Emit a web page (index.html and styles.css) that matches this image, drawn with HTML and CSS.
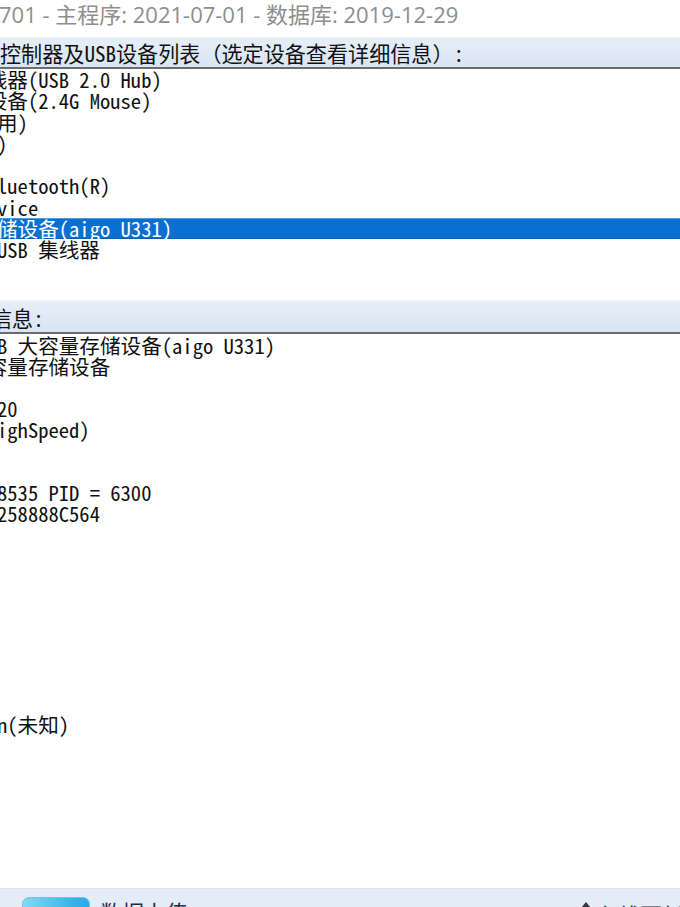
FILE: index.html
```html
<!DOCTYPE html>
<html lang="zh-CN">
<head>
<meta charset="utf-8">
<title>ChipGenius</title>
<link rel="stylesheet" href="styles.css">
</head>
<body>
<div class="window">
  <header class="title">
    <span class="title-text">701 - 主程序: 2021-07-01 - 数据库: 2019-12-29</span>
  </header>

  <div class="band band-top">
    <span class="band-text">控制器及USB设备列表（选定设备查看详细信息）:</span>
  </div>

  <div class="pane list">
    <div class="row cut">线器(USB 2.0 Hub)</div>
    <div class="row cut">设备(2.4G Mouse)</div>
    <div class="row">用)</div>
    <div class="row">)</div>
    <div class="row"> </div>
    <div class="row">luetooth(R)</div>
    <div class="row">vice</div>
    <div class="row selected">储设备(aigo U331)</div>
    <div class="row">USB 集线器</div>
  </div>

  <div class="band band-detail">
    <span class="band-text cut-text">信息:</span>
  </div>

  <div class="pane details">
    <div class="row">B 大容量存储设备(aigo U331)</div>
    <div class="row cut">容量存储设备</div>
    <div class="row"> </div>
    <div class="row">20</div>
    <div class="row">ighSpeed)</div>
    <div class="row"> </div>
    <div class="row"> </div>
    <div class="row">8535 PID = 6300</div>
    <div class="row">258888C564</div>
    <div class="row"> </div>
    <div class="row"> </div>
    <div class="row"> </div>
    <div class="row"> </div>
    <div class="row"> </div>
    <div class="row"> </div>
    <div class="row"> </div>
    <div class="row"> </div>
    <div class="row"> </div>
    <div class="row">n(未知)</div>
  </div>

  <footer class="footer">
    <div class="footer-left">
      <span class="btn"></span>
      <span class="footer-link">数据上传</span>
    </div>
    <div class="footer-right">
      <svg class="footer-icon" width="12" height="12" viewBox="0 0 12 12"><path d="M6 0 L11 6 L6 12 L1 6 Z" fill="#334"/></svg>
      <span class="footer-link">在线更新</span>
    </div>
  </footer>
</div>
</body>
</html>
```

FILE: styles.css
```css
html, body {
  margin: 0;
  padding: 0;
  background: #ffffff;
}

body {
  width: 680px;
  height: 907px;
  overflow: hidden;
}

.window {
  display: flex;
  flex-direction: column;
  width: 680px;
}

.title {
  height: 37px;
  display: flex;
  align-items: flex-start;
  padding-top: 0;
  box-sizing: border-box;
  overflow: hidden;
}

.title-text {
  font-family: "Open Sans", "Noto Sans CJK SC", sans-serif;
  font-size: 22px;
  line-height: 28px;
  color: #8e8e8e;
  white-space: pre;
  margin-left: -1px;
}

.band {
  background: linear-gradient(#e6eef8, #d9e5f3);
  border-top: 1px solid #eef3fa;
  border-bottom: 2px solid #6c6c6c;
  box-sizing: border-box;
  overflow: hidden;
  display: flex;
  align-items: center;
}

.band-top {
  height: 32px;
}

.band-detail {
  height: 34px;
  padding-top: 3px;
}

.band-text {
  font-family: "Noto Sans Mono CJK SC", "Noto Sans CJK SC", "Liberation Mono", monospace;
  font-size: 21.1px;
  line-height: 24px;
  color: #111;
  white-space: pre;
}

.cut-text {
  margin-left: -9px;
}

.pane {
  overflow: hidden;
  font-family: "Noto Sans Mono CJK SC", "Noto Sans CJK SC", "Liberation Mono", monospace;
  font-size: 20.6px;
  color: #111;
}

.list {
  height: 231px;
  line-height: 21.3px;
}

.list .row {
  height: 21.3px;
}

.details {
  height: 554px;
  padding-top: 1px;
  box-sizing: border-box;
  line-height: 21.05px;
}

.details .row {
  height: 21.05px;
}

.row {
  white-space: pre;
  margin-left: -3px;
}

.row.cut {
  margin-left: -13.3px;
}

.row.selected {
  margin-left: 0;
  text-indent: -3px;
  background: #0a70d0;
  box-shadow: inset 0 1px 0 #4c9be0, inset 0 -1px 0 #075fb3;
  color: #ffffff;
}

.footer {
  border-top: 1px solid #dfe4ea;
  background: #e4edf7;
  height: 40px;
  display: flex;
  justify-content: space-between;
  align-items: flex-start;
  padding-top: 8px;
  box-sizing: border-box;
}

.footer-left {
  display: flex;
  align-items: flex-start;
  gap: 10px;
  margin-left: 22px;
}

.btn {
  width: 68px;
  height: 28px;
  border-radius: 7px;
  background: linear-gradient(90deg, #86d8f3, #3cb6ea 70%, #2aa9e4);
  border: 1px solid #6cc4ea;
  box-sizing: border-box;
}

.footer-link {
  font-family: "Noto Sans CJK SC", sans-serif;
  font-size: 22px;
  line-height: 24px;
  color: #1f2d44;
  margin-top: 2px;
}

.footer-right {
  display: flex;
  align-items: flex-start;
  gap: 4px;
  margin-right: -4px;
  margin-top: 3px;
}

.footer-icon {
  margin-top: 2px;
}
```
